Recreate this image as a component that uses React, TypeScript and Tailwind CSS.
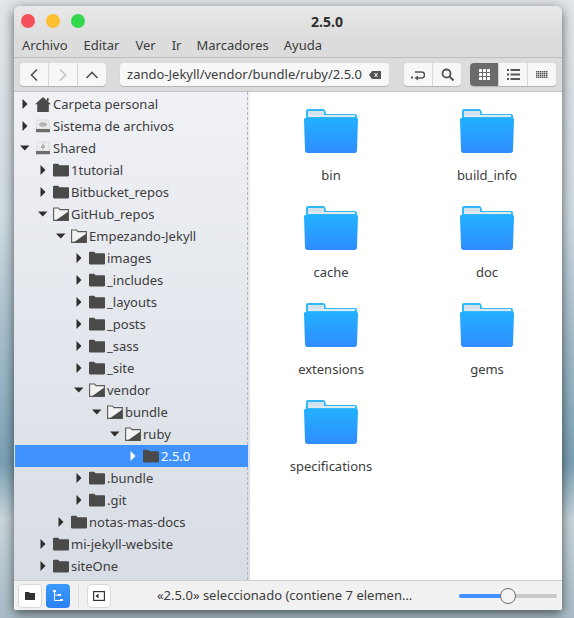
import React from "react";

const F = "font-['Noto_Sans','Open_Sans',sans-serif]";

function Arrow({ open, white }: { open?: boolean; white?: boolean }) {
  const c = white ? "#ffffff" : "#2e2e2e";
  return (
    <svg width="10" height="10" viewBox="0 0 10 10" className="shrink-0">
      {open ? <path d="M0 2.500h9.500L4.750 7.500z" fill={c} /> : <path d="M2.500 0v10L7.500 5z" fill={c} />}
    </svg>
  );
}

function ClosedFolder() {
  return (
    <svg width="16" height="14" viewBox="0 0 16 14" className="shrink-0">
      <path d="M0 1.500C0 1 .4.7 1 .7h4.200l1.300 1.500H15c.6 0 1 .4 1 1v9.300c0 .5-.4.9-1 .9H1c-.6 0-1-.4-1-.9z" fill="#4a4a4a" />
    </svg>
  );
}

function OpenFolder() {
  return (
    <svg width="16" height="14" viewBox="0 0 16 14" className="shrink-0">
      <path d="M.6 1h5l1.300 1.600h8.500v10.800H.6z" fill="#f3f3f3" stroke="#5a5a5a" strokeWidth="1.100" />
      <path d="M15.400 4.500v8.900H2.600z" fill="#4a4a4a" />
    </svg>
  );
}

function Home() {
  return (
    <svg width="16" height="15" viewBox="0 0 16 15" className="shrink-0">
      <path d="M8 0l8 7.200h-2.200V15H2.200V7.200H0z" fill="#4a4a4a" />
      <rect x="12" y="1" width="1.600" height="3" fill="#4a4a4a" />
    </svg>
  );
}

function Disk({ usb }: { usb?: boolean }) {
  return (
    <svg width="16" height="14" viewBox="0 0 16 14" className="shrink-0">
      <path d="M2.500 1h11l1.500 9H1z" fill="#ececec" stroke="#c9c9c9" strokeWidth=".5" />
      <rect x="1" y="10" width="14" height="3.200" rx=".5" fill="#6c6c6c" />
      {usb ? <path d="M8 2.500v6M6.500 5v1.500H8M9.500 4.500V6H8" stroke="#8a8a8a" strokeWidth=".8" fill="none" /> : <ellipse cx="8" cy="5.500" rx="3.800" ry="2.300" fill="#b4b4b4" />}
    </svg>
  );
}

type Kind = "closed" | "open" | "home" | "disk" | "usb";
const rows: { t: string; l: number; k: Kind; o?: boolean; s?: boolean }[] = [
  { t: "Carpeta personal", l: 0, k: "home" },
  { t: "Sistema de archivos", l: 0, k: "disk" },
  { t: "Shared", l: 0, k: "usb", o: true },
  { t: "1tutorial", l: 1, k: "closed" },
  { t: "Bitbucket_repos", l: 1, k: "closed" },
  { t: "GitHub_repos", l: 1, k: "open", o: true },
  { t: "Empezando-Jekyll", l: 2, k: "open", o: true },
  { t: "images", l: 3, k: "closed" },
  { t: "_includes", l: 3, k: "closed" },
  { t: "_layouts", l: 3, k: "closed" },
  { t: "_posts", l: 3, k: "closed" },
  { t: "_sass", l: 3, k: "closed" },
  { t: "_site", l: 3, k: "closed" },
  { t: "vendor", l: 3, k: "open", o: true },
  { t: "bundle", l: 4, k: "open", o: true },
  { t: "ruby", l: 5, k: "open", o: true },
  { t: "2.5.0", l: 6, k: "closed", s: true },
  { t: ".bundle", l: 3, k: "closed" },
  { t: ".git", l: 3, k: "closed" },
  { t: "notas-mas-docs", l: 2, k: "closed" },
  { t: "mi-jekyll-website", l: 1, k: "closed" },
  { t: "siteOne", l: 1, k: "closed" },
];
const pad = ["pl-[5px]", "pl-[23px]", "pl-[41px]", "pl-[59px]", "pl-[77px]", "pl-[95px]", "pl-[113px]"];

function BigFolder() {
  return (
    <svg width="54" height="44" viewBox="0 0 54 44">
      <defs>
        <linearGradient id="fg" x1="0" y1="0" x2="0" y2="1">
          <stop offset="0" stopColor="#22b0ff" />
          <stop offset="1" stopColor="#2f8dff" />
        </linearGradient>
      </defs>
      <path d="M2 2c0-1.200.8-2 2-2h15c1.200 0 2 .8 2.400 2L22 5h29c1.200 0 2 .8 2 2v4H2z" fill="#2fb8fa" />
      <rect x="4" y="2" width="16" height="4" fill="#d2e2ec" />
      <rect x="4" y="6" width="47" height="2" fill="#dfe9ef" />
      <path d="M0 10.500c0-1 .7-1.500 1.500-1.500h51c.8 0 1.500.5 1.500 1.500l-1 31c0 1.500-1 2.500-2.500 2.500h-47C2 44 1 43 1 41.500z" fill="url(#fg)" />
    </svg>
  );
}

function Seg({ children, active, last }: { children: React.ReactNode; active?: boolean; last?: boolean }) {
  return (
    <div className={`flex h-full items-center justify-center ${last ? "w-[28px]" : "w-[29px] border-r border-[#d6d6d6]"} ${active ? "bg-[#6a6a6a]" : ""}`}>
      {children}
    </div>
  );
}

const segBox = "flex h-[23px] overflow-hidden rounded-[4px] bg-[#f7f7f7] shadow-[0_1px_1px_rgba(0,0,0,0.18)]";

function Dots({ c, cols, rowsN, s, g }: { c: string; cols: number; rowsN: number; s: number; g: number }) {
  const w = cols * s + (cols - 1) * g;
  const h = rowsN * s + (rowsN - 1) * g;
  const out = [];
  for (let y = 0; y < rowsN; y++) for (let x = 0; x < cols; x++) out.push(<rect key={x + "-" + y} x={x * (s + g)} y={y * (s + g)} width={s} height={s} rx={s > 2 ? 0.6 : 0} fill={c} />);
  return <svg width={w} height={h} viewBox={`0 0 ${w} ${h}`}>{out}</svg>;
}

export default function App() {
  const folders = ["bin", "build_info", "cache", "doc", "extensions", "gems", "specifications"];
  return (
    <div className={`h-[618px] w-[574px] overflow-hidden bg-[linear-gradient(180deg,#e2e5e8_0%,#cfdbe2_35%,#7aa0b4_75%,#c9d6dc_84%,#a9bcc6_100%)] pl-[14px] pr-[12px] pt-[6px] ${F}`}>
      <div className="flex h-[604px] flex-col overflow-hidden rounded-t-[6px] rounded-b-[2px] bg-[#dcdcdc] text-[13px] text-[#3c3c3c] shadow-[0_3px_12px_rgba(0,0,0,0.6)]">
        {/* title */}
        <div className="relative flex h-[28px] shrink-0 items-center bg-gradient-to-b from-[#e8e8e8] to-[#dedede] pl-[7px] pt-[1px]">
          <div className="flex gap-[11px] pt-[1px]">
            <span className="h-[14px] w-[14px] rounded-full bg-[#f4505a]" />
            <span className="h-[14px] w-[14px] rounded-full bg-[#fdbf30]" />
            <span className="h-[14px] w-[14px] rounded-full bg-[#33d84c]" />
          </div>
          <span className="absolute left-[297px] top-[7px] text-[14px] font-bold leading-[18px] text-[#2e2e2e]">2.5.0</span>
        </div>
        {/* menu */}
        <div className="flex h-[24px] shrink-0 items-center gap-[16px] border-b border-[#bdbdbd] pl-[8px] text-[13px]">
          <span>Archivo</span><span>Editar</span><span>Ver</span><span className="mr-[-1px]">Ir</span><span className="mr-[-1px]">Marcadores</span><span>Ayuda</span>
        </div>
        {/* toolbar */}
        <div className="flex h-[34px] shrink-0 items-center border-b border-[#c4c4c4] pl-[6px]">
          <div className={segBox}>
            <Seg><svg width="10" height="14" viewBox="0 0 10 14"><path d="M8 1.500 2.500 7 8 12.500" stroke="#555" strokeWidth="1.700" fill="none" /></svg></Seg>
            <Seg><svg width="10" height="14" viewBox="0 0 10 14"><path d="M2 1.500 7.500 7 2 12.500" stroke="#c4c4c4" strokeWidth="1.700" fill="none" /></svg></Seg>
            <Seg last><svg width="14" height="10" viewBox="0 0 14 10"><path d="M1.500 8 7 2.500 12.500 8" stroke="#555" strokeWidth="1.700" fill="none" /></svg></Seg>
          </div>
          <div className="ml-[14px] flex h-[23px] w-[269px] items-center rounded-[4px] bg-[#f7f7f7] pl-[7px] pr-[8px] shadow-[0_1px_1px_rgba(0,0,0,0.18)]">
            <div className="flex min-w-0 flex-1 justify-end overflow-hidden whitespace-nowrap text-[13px]">
              <span className="shrink-0">Empezando-Jekyll/vendor/bundle/ruby/2.5.0</span>
            </div>
            <svg width="12" height="8" viewBox="0 0 12 8" className="ml-[7px] shrink-0"><path d="M3 0h9v8H3L0 4z" fill="#555" /><path d="M5.500 2l3 4M8.500 2l-3 4" stroke="#f7f7f7" strokeWidth="1" /></svg>
          </div>
          <div className={`ml-[15px] ${segBox}`}>
            <Seg><svg width="14" height="12" viewBox="0 0 14 12"><path d="M4 3h6.500a2.500 2.500 0 0 1 0 6H6" stroke="#555" strokeWidth="1.500" fill="none" /><path d="M7 6.500v5L3.500 9z" fill="#555" /><rect x="0" y="7.500" width="2" height="2" fill="#555" /></svg></Seg>
            <Seg last><svg width="13" height="13" viewBox="0 0 13 13"><circle cx="5.500" cy="5.500" r="4" stroke="#555" strokeWidth="1.800" fill="none" /><path d="M8.500 8.500l4 4" stroke="#555" strokeWidth="2" /></svg></Seg>
          </div>
          <div className={`ml-[9px] ${segBox}`}>
            <Seg active><Dots c="#ffffff" cols={3} rowsN={3} s={3} g={1} /></Seg>
            <Seg><svg width="13" height="11" viewBox="0 0 13 11"><g fill="#555"><rect x="0" y="0" width="2" height="2" /><rect x="3.500" y="0" width="9.500" height="2" /><rect x="0" y="4.500" width="2" height="2" /><rect x="3.500" y="4.500" width="9.500" height="2" /><rect x="0" y="9" width="2" height="2" /><rect x="3.500" y="9" width="9.500" height="2" /></g></svg></Seg>
            <Seg last><Dots c="#555" cols={6} rowsN={4} s={1.500} g={0.500} /></Seg>
          </div>
        </div>
        {/* body */}
        <div className="flex min-h-0 flex-1">
          <div className="flex h-full w-[236px] shrink-0 bg-gradient-to-b from-[#eff1f5] to-[#d8dce4] pl-[1px]">
            <div className="flex h-full w-[233px] flex-col border-r border-dashed border-[#b5b5b5] pt-[1px]">
              {rows.map((r) => (
                <div key={r.t} className={`flex h-[22px] shrink-0 items-center ${pad[r.l]} ${r.s ? "mr-[-1px] bg-[#4093ff] text-white" : ""}`}>
                  <Arrow open={r.o} white={r.s} />
                  <span className="ml-[5px] flex w-[18px] shrink-0 items-center">
                    {r.k === "closed" ? <ClosedFolder /> : r.k === "open" ? <OpenFolder /> : r.k === "home" ? <Home /> : r.k === "disk" ? <Disk /> : <Disk usb />}
                  </span>
                  <span className="whitespace-nowrap leading-none">{r.t}</span>
                </div>
              ))}
            </div>
          </div>
          <div className="grid flex-1 grid-cols-[156px_156px] content-start bg-white pl-[3px] pt-[6px]">
            {folders.map((f) => (
              <div key={f} className="flex h-[97px] flex-col items-center pt-[11px]">
                <BigFolder />
                <span className="mt-[13px] leading-[18px]">{f}</span>
              </div>
            ))}
          </div>
        </div>
        {/* status */}
        <div className="flex h-[30px] shrink-0 items-center border-t border-[#d0d0d0] bg-[#f1f1f1] pl-[4px] text-[13px]">
          <div className="flex h-[24px] w-[24px] items-center justify-center rounded-[4px] border border-[#d8d8d8] bg-white">
            <svg width="10" height="8" viewBox="0 0 10 8"><path d="M0 0h4l1 1h5v7H0z" fill="#333" /></svg>
          </div>
          <div className="ml-[4px] flex h-[24px] w-[24px] items-center justify-center rounded-[4px] bg-gradient-to-b from-[#3b9bfb] to-[#2a7ff5]">
            <svg width="12" height="12" viewBox="0 0 12 12"><path d="M2.500 1v9.500H11M2.500 5H8" stroke="#fff" strokeWidth="1" fill="none" /><rect x="1" y="0" width="3" height="2" fill="#fff" /><rect x="6" y="4" width="3" height="2" fill="#fff" /><rect x="8" y="9" width="3" height="2" fill="#fff" /></svg>
          </div>
          <div className="ml-[8px] h-[24px] w-px bg-[#dcdcdc]" />
          <div className="ml-[8px] flex h-[24px] w-[24px] items-center justify-center rounded-[4px] border border-[#d8d8d8] bg-white">
            <svg width="12" height="10" viewBox="0 0 12 10"><rect x=".6" y=".6" width="10.800" height="8.800" stroke="#333" strokeWidth="1.200" fill="none" /><path d="M5.500 2.500v5L2.500 5z" fill="#333" /></svg>
          </div>
          <div className="ml-[46px] w-[256px] shrink-0 whitespace-nowrap">«2.5.0» seleccionado (contiene 7 elemen…</div>
          <div className="relative ml-[46px] h-[4px] w-[98px] rounded-full bg-[#c8c8c8]">
            <div className="h-full w-[49px] rounded-l-full bg-[#4093ff]" />
            <div className="absolute left-[41px] top-[-6px] h-[16px] w-[16px] rounded-full border border-[#6e6e6e] bg-[#f4f4f4]" />
          </div>
        </div>
      </div>
    </div>
  );
}
